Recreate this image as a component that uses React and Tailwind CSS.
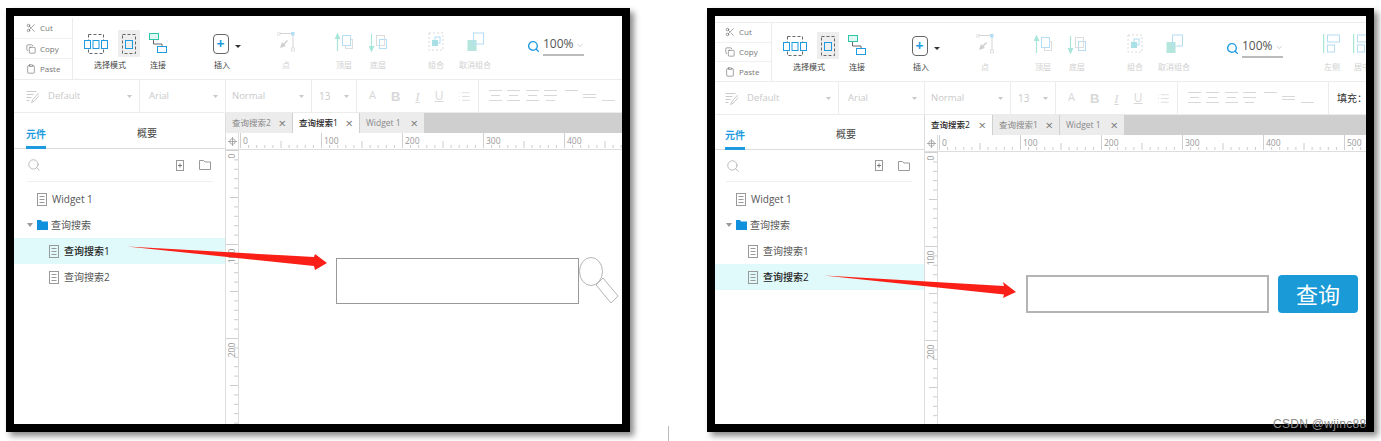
import React from 'react';
import { Scissors, Copy, Clipboard, Search, ChevronDown, List } from 'lucide-react';

const FONT = "font-['Open_Sans','Noto_Sans_CJK_SC',sans-serif]";

const variants = {
  left: {
    frame: 'w-[624px]',
    shift: 'ml-0',
    strip: 'h-[2px]',
    toolbar: 'h-[61px]',
    toolPad: 'pt-[12px]',
    panelHead: 'h-[36px]',
    searchRow: 'h-[32px]',
    rulerMarks: [0, 100, 200, 300, 400],
    extras: false,
  },
  right: {
    frame: 'w-[667px] ml-[77px]',
    shift: '-ml-[2px]',
    strip: 'h-[7px] border-b border-[#ececec]',
    toolbar: 'h-[58px]',
    toolPad: 'pt-[9px]',
    panelHead: 'h-[35px]',
    searchRow: 'h-[31px]',
    rulerMarks: [0, 100, 200, 300, 400, 500],
    extras: true,
  },
};

const Dashed = ({ children, w = 24, h = 20 }) => (
  <svg width={w} height={h} viewBox={`0 0 ${w} ${h}`} fill="none">
    <rect x="3.5" y="0.5" width={w - 7} height={h - 1} stroke="#666" strokeDasharray="3 2" />
    {children}
  </svg>
);

const SelectIcons = () => (
  <div className="flex items-center h-[27px]">
    <div className="w-[30px] flex justify-center">
      <svg width="24" height="20" viewBox="0 0 24 20" fill="none">
        <rect x="4.5" y="0.5" width="15" height="19" stroke="#666" strokeDasharray="3 2" />
        <rect x="0.5" y="6.5" width="6" height="8" fill="#fff" stroke="#1e9be0" />
        <rect x="9" y="6.5" width="6" height="8" fill="#fff" stroke="#1e9be0" />
        <rect x="17.5" y="6.5" width="6" height="8" fill="#fff" stroke="#1e9be0" />
      </svg>
    </div>
    <div className="w-[22px] h-[27px] ml-[7px] bg-[#eeeeee] flex items-center justify-center">
      <Dashed w={20} h={20}>
        <rect x="6.5" y="6.5" width="7" height="8" stroke="#1e9be0" />
      </Dashed>
    </div>
  </div>
);

const ConnectIcon = () => (
  <svg width="18" height="20" viewBox="0 0 18 20" fill="none" className="mt-[3px]">
    <rect x="0.5" y="0.5" width="9" height="6" fill="#dff8f4" stroke="#2ec4a8" />
    <rect x="8.5" y="13.5" width="9" height="6" stroke="#1e9be0" />
    <path d="M4.5 7v4h8.500v2" stroke="#666" />
  </svg>
);

const InsertIcon = () => (
  <div className="flex items-end h-[27px] mr-[-9px]">
    <div className="w-[16px] h-[20px] mb-[3px] rounded-[4px] border border-[#666] flex items-center justify-center text-[#1e9be0] text-[14px] font-bold leading-none">+</div>
    <svg width="6" height="3" viewBox="0 0 6 3" className="ml-[6px] mb-[9px]"><path d="M0 0h6L3 3z" fill="#333" /></svg>
  </div>
);

const PointIcon = () => (
  <svg width="18" height="20" viewBox="0 0 18 20" fill="none" className="mt-[2px]">
    <path d="M2 1.500h14v16" stroke="#d4d4d4" />
    <rect x="0" y="0" width="3" height="3" fill="#fff" stroke="#d4d4d4" strokeWidth="0.700" />
    <rect x="14" y="0" width="3.500" height="3.500" fill="#b5ddf5" />
    <rect x="14.500" y="16" width="3" height="3" fill="#fff" stroke="#d4d4d4" strokeWidth="0.700" />
    <path d="M3 16l2-6 1.500 1.500L10 8l1 1-3.500 3.500L9 14z" fill="#cfcfcf" />
  </svg>
);

const LayerIcon = ({ up }) => (
  <svg width="18" height="19" viewBox="0 0 18 19" fill="none" className="mt-[3px]">
    <path d={up ? 'M2.500 18V3M0.500 5.500L2.500 1l2 4.500z' : 'M2.500 1v15M0.500 13.500L2.500 18l2-4.500z'} stroke="#a8e6da" fill="#a8e6da" strokeWidth="1.200" />
    <rect x="10.500" y="6.500" width="7" height="9" stroke={up ? '#dddddd' : '#b5ddf5'} fill="#fff" />
    <rect x="7.500" y="2.500" width="8" height="10" stroke={up ? '#b5ddf5' : '#dddddd'} fill={up ? '#fff' : 'none'} />
  </svg>
);

const GroupIcon = () => (
  <svg width="16" height="19" viewBox="0 0 16 19" fill="none" className="mt-[2px]">
    <rect x="1" y="1" width="14" height="17" stroke="#d8d8d8" strokeDasharray="2 2" />
    <rect x="7" y="5" width="5" height="6" stroke="#b5ddf5" fill="#fff" />
    <rect x="4" y="8" width="6" height="6" fill="#a8e0e6" />
  </svg>
);

const UngroupIcon = () => (
  <svg width="17" height="20" viewBox="0 0 17 20" fill="none" className="mt-[2px]">
    <rect x="0.500" y="8" width="9" height="11" fill="#b5e6dd" />
    <rect x="6.500" y="1" width="10" height="11" stroke="#b5ddf5" fill="none" />
  </svg>
);

const AlignLeftIcon = () => (
  <svg width="18" height="20" viewBox="0 0 18 20" fill="none" className="mt-[2px]">
    <path d="M0.500 0v19" stroke="#a8e6da" strokeWidth="1.500" />
    <rect x="4.500" y="1" width="12" height="7" stroke="#b5ddf5" />
    <rect x="4.500" y="11" width="7" height="7" stroke="#b5ddf5" />
  </svg>
);

const Tool = ({ label, width, className = '', children }) => (
  <div className={`flex flex-col items-center shrink-0 ${className}`} style={{ width }}>
    <div className="h-[27px] flex justify-center">{children}</div>
    <span className="mt-[2px] text-[8px] leading-[12px] whitespace-nowrap">{label}</span>
  </div>
);

const ClipRow = ({ Icon, label }) => (
  <div className="flex-1 flex items-center pl-[12px] gap-[4px] border-b border-[#f0f0f0] last:border-b-0 text-[8px] text-[#777]">
    <Icon size={10} strokeWidth={1.300} className="text-[#555]" />
    {label}
  </div>
);

const Toolbar = ({ v }) => (
  <div className={`flex border-b border-[#ececec] box-content ${v.toolbar}`}>
    <div className="w-[59px] shrink-0 flex flex-col border-r border-[#ececec]">
      <ClipRow Icon={Scissors} label="Cut" />
      <ClipRow Icon={Copy} label="Copy" />
      <ClipRow Icon={Clipboard} label="Paste" />
    </div>
    <div className={`flex items-start text-[#444] ${v.toolPad}`}>
      <Tool label="选择模式" width={70} className="ml-[2px]"><SelectIcons /></Tool>
      <Tool label="连接" width={26}><ConnectIcon /></Tool>
      <Tool label="插入" width={30} className="ml-[36px]"><InsertIcon /></Tool>
      <div className="flex items-start text-[#cfcfcf]">
        <Tool label="点" width={20} className="ml-[39px]"><PointIcon /></Tool>
        <Tool label="顶层" width={24} className="ml-[36px]"><LayerIcon up /></Tool>
        <Tool label="底层" width={24} className="ml-[10px]"><LayerIcon /></Tool>
        <Tool label="组合" width={24} className="ml-[34px]"><GroupIcon /></Tool>
        <Tool label="取消组合" width={36} className="ml-[9px]"><UngroupIcon /></Tool>
      </div>
      <div className="ml-[34px] shrink-0 flex items-end h-[26px] text-[#555]">
        <Search size={13} strokeWidth={2.600} className="text-[#1e9be0] mb-[3px] mr-[3px]" />
        <div className="w-[41px] h-[26px] pt-[3px] border-b-2 border-[#bbbbbb] flex items-center text-[12px] leading-none">
          100%
          <ChevronDown size={9} className="ml-[2px] mt-[4px] text-[#bbb]" />
        </div>
      </div>
      {v.extras && (
        <div className="flex items-start text-[#cfcfcf]">
          <Tool label="左侧" width={20} className="ml-[39px]"><AlignLeftIcon /></Tool>
          <Tool label="居中" width={20} className="ml-[10px]"><AlignLeftIcon /></Tool>
        </div>
      )}
    </div>
  </div>
);

const Caret = () => (
  <svg width="5" height="3" viewBox="0 0 5 3" className="shrink-0"><path d="M0 0h5L2.500 3z" fill="#c8c8c8" /></svg>
);

const FormatCell = ({ width, children, className = '' }) => (
  <div className={`h-full shrink-0 flex items-center border-r border-[#ececec] ${className}`} style={{ width }}>
    {children}
  </div>
);

const AlignIcon = ({ rows = [0, 5, 10], widths = [13, 10, 13], className = '' }) => (
  <svg width="13" height="14" viewBox="0 0 13 14" className={className}>
    {rows.map((y, i) => (
      <rect key={i} x={(13 - widths[i]) / 2} y={y + 1} width={widths[i]} height="1" fill="#d8d8d8" />
    ))}
  </svg>
);

const FormatBar = ({ v }) => (
  <div className="h-[33px] shrink-0 flex items-center text-[#c9c9c9] text-[9.500px] border-b border-[#ececec]">
    <FormatCell width={126} className="pl-[12px]">
      <svg width="13" height="13" viewBox="0 0 13 13" fill="none" stroke="#c4c4c4" strokeWidth="0.900">
        <path d="M0.500 1.500h10M0.500 4.500h7M0.500 7.500h5M0.500 10.500h3" />
        <path d="M12 3.500L7 9.500l-1.500 3 3-1.500 5-6z" />
      </svg>
      <span className="ml-[9px] flex-1">Default</span>
      <Caret />
      <span className="w-[7px]" />
    </FormatCell>
    <FormatCell width={86} className="pl-[9px]">
      <span className="flex-1">Arial</span><Caret /><span className="w-[7px]" />
    </FormatCell>
    <FormatCell width={86} className="pl-[6px]">
      <span className="flex-1">Normal</span><Caret /><span className="w-[7px]" />
    </FormatCell>
    <FormatCell width={45} className="pl-[7px]">
      <span className="flex-1 text-[10px]">13</span><Caret /><span className="w-[7px]" />
    </FormatCell>
    <FormatCell width={122} className="pl-[12px] gap-[15px] text-[#d8d8d8]">
      <span className="text-[11px] mb-[4px] leading-none">A</span>
      <span className="text-[13px] font-bold leading-none font-['Liberation_Sans']">B</span>
      <span className="text-[13px] italic leading-none font-['Liberation_Serif'] underline">I</span>
      <span className="text-[12px] leading-none underline">U</span>
      <List size={13} strokeWidth={1.500} />
    </FormatCell>
    <FormatCell width={151} className="pl-[10px]">
      <AlignIcon widths={[13, 9, 13]} />
      <AlignIcon widths={[13, 9, 13]} className="ml-[5px]" />
      <AlignIcon widths={[13, 9, 13]} className="ml-[6px]" />
      <AlignIcon widths={[13, 13, 9]} className="ml-[5px]" />
      <AlignIcon rows={[-3, 0]} widths={[13, 13]} className="ml-[8px]" />
      <AlignIcon rows={[4, 7]} widths={[13, 13]} className="ml-[5px]" />
      <AlignIcon rows={[10, 13]} widths={[13, 13]} className="ml-[6px]" />
    </FormatCell>
    {v.extras && <span className="ml-[8px] text-[10px] text-[#333] whitespace-nowrap">填充：</span>}
  </div>
);

const DocIcon = () => (
  <svg width="10" height="13" viewBox="0 0 10 13" fill="none" className="shrink-0">
    <rect x="0.500" y="0.500" width="9" height="12" stroke="#999" />
    <path d="M2.500 3.500h5M2.500 6.500h5M2.500 9.500h5" stroke="#999" />
  </svg>
);

const Row = ({ indent, selected, children }) => (
  <div className={`h-[26px] flex items-center text-[10px] ${indent} ${selected ? 'bg-[#e0f9fa] text-[#222]' : 'text-[#555]'}`}>
    {children}
  </div>
);

const Sidebar = ({ v, selected }) => (
  <div className="w-[212px] shrink-0 border-r border-[#dddddd]">
    <div className={`flex items-end border-b border-[#dcdcdc] ${v.panelHead}`}>
      <div className="ml-[12px] w-[20px] h-[22px] flex justify-center items-start border-b-[3px] border-[#1e9be0] text-[10px] font-bold text-[#1e9be0] -mb-px">元件</div>
      <div className="ml-[91px] h-[22px] text-[10px] text-[#444]">概要</div>
    </div>
    <div className={`flex items-center ${v.searchRow}`}>
      <Search size={14} strokeWidth={1.100} className="ml-[13px] text-[#999]" />
      <svg width="8" height="11" viewBox="0 0 8 11" fill="none" className="ml-[135px]">
        <rect x="0.500" y="0.500" width="7" height="10" stroke="#999" />
        <path d="M4 3.500v4M2 5.500h4" stroke="#777" />
      </svg>
      <svg width="12" height="10" viewBox="0 0 12 10" fill="none" className="ml-[15px]">
        <path d="M0.500 9.500v-9h4l1.500 1.500h5.500v7.500z" stroke="#999" />
      </svg>
    </div>
    <div className="ml-[13px] w-[186px] h-px bg-[#eeeeee]" />
    <div className="mt-[4px]">
      <Row indent="pl-[23px]"><DocIcon /><span className="ml-[5px]">Widget 1</span></Row>
      <Row indent="pl-[13px]">
        <svg width="6" height="4" viewBox="0 0 6 4" className="mr-[4px]"><path d="M0 0h6L3 4z" fill="#999" /></svg>
        <svg width="11" height="10" viewBox="0 0 11 10"><path d="M0 0h4l1 1.500h6V10H0z" fill="#0f8fdc" /></svg>
        <span className="ml-[3px]">查询搜索</span>
      </Row>
      <Row indent="pl-[35px]" selected={selected === 1}>
        <DocIcon /><span className={`ml-[5px] ${selected === 1 ? 'font-medium' : ''}`}>查询搜索1</span>
      </Row>
      <Row indent="pl-[35px]" selected={selected === 2}>
        <DocIcon /><span className={`ml-[5px] ${selected === 2 ? 'font-medium' : ''}`}>查询搜索2</span>
      </Row>
    </div>
  </div>
);

const Tab = ({ label, width, active }) => (
  <div
    className={`h-full shrink-0 flex items-center justify-between pl-[6px] pr-[6px] mr-px text-[8.500px] ${active ? 'bg-white text-[#222] font-medium' : 'bg-[#ececec] text-[#888]'}`}
    style={{ width }}
  >
    <span className="whitespace-nowrap">{label}</span>
    <span className="text-[13px] leading-none text-[#777] font-normal">×</span>
  </div>
);

const HRuler = ({ marks }) => {
  const ticks = [];
  for (let i = 0; i <= 60; i++) {
    const x = 1.5 + i * 8.1;
    if (i % 10 === 0) continue;
    ticks.push(<line key={i} x1={x} x2={x} y1={i % 5 === 0 ? 8 : 12} y2={15} stroke="#cccccc" />);
  }
  return (
    <svg width="500" height="16" viewBox="0 0 500 16" className="block shrink-0">
      {ticks}
      {marks.map((n, i) => (
        <g key={n}>
          <line x1={1.5 + i * 81} x2={1.5 + i * 81} y1="0" y2="15" stroke="#d0d0d0" />
          <text x={4 + i * 81} y="11" fontSize="8.500" fill="#999">{n}</text>
        </g>
      ))}
    </svg>
  );
};

const VRuler = () => {
  const ticks = [];
  for (let i = 0; i <= 30; i++) {
    const y = 1.5 + i * 9.4;
    if (i % 10 === 0) continue;
    ticks.push(<line key={i} x1={i % 5 === 0 ? 4 : 8} x2="12" y1={y} y2={y} stroke="#cccccc" />);
  }
  return (
    <svg width="13" height="290" viewBox="0 0 13 290" className="block">
      {ticks}
      {[0, 100, 200].map((n, i) => (
        <g key={n}>
          <line x1="0" x2="12" y1={1.5 + i * 94} y2={1.5 + i * 94} stroke="#d0d0d0" />
          <text transform={`translate(9 ${(n === 0 ? 7 : 13) + i * 94}) rotate(-90)`} fontSize="8.500" fill="#999" textAnchor="middle">{n}</text>
        </g>
      ))}
    </svg>
  );
};

const Magnifier = () => (
  <svg width="42" height="48" viewBox="0 0 42 48" fill="none" className="absolute left-[340px] top-[108px]">
    <ellipse cx="12" cy="14.500" rx="11.500" ry="14" fill="#fff" stroke="#b5b5b5" />
    <path d="M17 28l7-7 15 18-7 7z" fill="#fff" stroke="#b5b5b5" />
  </svg>
);

const Workspace = ({ v, tabs, children }) => (
  <div className="flex-1 min-w-0 flex flex-col">
    <div className="h-[20px] shrink-0 flex bg-[#cfcfcf]">
      {tabs.map((t) => <Tab key={t.label} {...t} />)}
    </div>
    <div className="h-[16px] shrink-0 flex border-b border-[#dddddd] box-content -mb-px">
      <div className="w-[13px] h-[16px] shrink-0 border-r border-[#dddddd] flex items-center justify-center text-[#aaa]">
        <svg width="9" height="9" viewBox="0 0 9 9" fill="none" stroke="#999" strokeWidth="0.800">
          <circle cx="4.500" cy="4.500" r="2.800" /><path d="M4.500 0v9M0 4.500h9" />
        </svg>
      </div>
      <HRuler marks={v.rulerMarks} />
    </div>
    <div className="flex-1 flex min-h-0">
      <div className="w-[13px] shrink-0 border-r border-[#dddddd] overflow-hidden"><VRuler /></div>
      <div className="flex-1 relative">{children}</div>
    </div>
  </div>
);

const AppWindow = ({ variant, selected, tabs, children }) => {
  const v = variants[variant];
  return (
    <div className={`h-[424px] shrink-0 border-8 border-black bg-white overflow-hidden shadow-[4px_4px_6px_rgba(0,0,0,0.45)] ${v.frame}`}>
      <div className={`w-[720px] h-full flex flex-col ${v.shift}`}>
        <div className={`shrink-0 ${v.strip}`} />
        <Toolbar v={v} />
        <FormatBar v={v} />
        <div className="flex-1 flex min-h-0">
          <Sidebar v={v} selected={selected} />
          <Workspace v={v} tabs={tabs}>{children}</Workspace>
        </div>
      </div>
    </div>
  );
};

const App = () => (
  <div className={`relative w-[1381px] h-[441px] bg-white overflow-hidden pt-[8px] pl-[6px] flex items-start ${FONT}`}>
    <AppWindow
      variant="left"
      selected={1}
      tabs={[
        { label: '查询搜索2', width: 66 },
        { label: '查询搜索1', width: 66, active: true },
        { label: 'Widget 1', width: 64 },
      ]}
    >
      <div className="absolute left-[97px] top-[109px] w-[243px] h-[46px] border border-[#999999] bg-white" />
      <Magnifier />
    </AppWindow>

    <AppWindow
      variant="right"
      selected={2}
      tabs={[
        { label: '查询搜索2', width: 67, active: true },
        { label: '查询搜索1', width: 66 },
        { label: 'Widget 1', width: 64 },
      ]}
    >
      <div className="absolute left-[88px] top-[124px] w-[243px] h-[38px] border-2 border-[#b4b4b4] bg-white" />
      <button className="absolute left-[340px] top-[124px] w-[80px] h-[38px] rounded-[4px] bg-[#1a9ad6] text-white text-[22px] leading-none">查询</button>
    </AppWindow>

    {/* red annotation arrows */}
    <svg width="1381" height="441" viewBox="0 0 1381 441" className="absolute inset-0 pointer-events-none">
      <path d="M127 246.500L314 257L315 254L327 263L315 270L314 266Z" fill="#fb2017" />
      <path d="M824 275.500L1004 286L1003 282L1016 292L1003 298L1004 294.500Z" fill="#fb2017" />
    </svg>

    <div className="absolute left-[668px] top-[426px] w-px h-[15px] bg-[#bbbbbb]" />
    <div className="absolute left-[1273px] top-[417px] text-[12px] leading-[14px] tracking-[0.3px] text-[#8c8c8c] font-['Liberation_Sans',sans-serif] whitespace-nowrap">CSDN @wjinc88</div>
  </div>
);

export default App;
